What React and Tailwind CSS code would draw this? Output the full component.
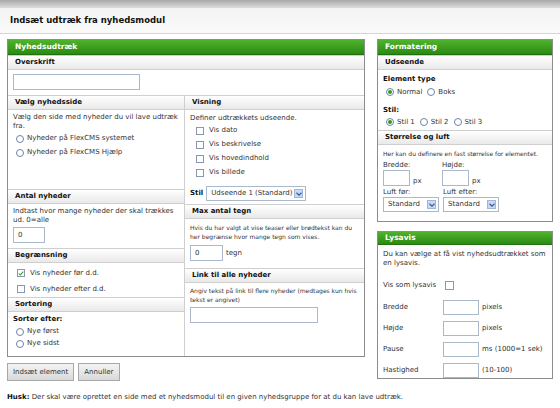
import React from "react";

const font = { fontFamily: '"DejaVu Sans", Verdana, sans-serif' };

const GreenHeader = ({ children }) => (
  <div className="h-[15px] flex items-center px-[7px] bg-gradient-to-b from-[#4fb32c] to-[#2b8a13] border-b border-[#21700e] text-white font-bold text-[7.5px]">
    {children}
  </div>
);

const SubHeader = ({ children }) => (
  <div className="h-[15px] flex items-center px-[7px] bg-gradient-to-b from-white to-[#e9e9e9] border-y border-[#cfcfcf] text-[#111] font-bold text-[7px]">
    {children}
  </div>
);

const Radio = ({ checked, label }) => (
  <span className="flex items-center gap-[3px]">
    <span className="w-[8px] h-[8px] rounded-full border border-[#6d84a4] bg-white flex items-center justify-center">
      {checked && <span className="w-[4px] h-[4px] rounded-full bg-[#2f9b1a]" />}
    </span>
    <span>{label}</span>
  </span>
);

const Check = ({ checked, label }) => (
  <div className="flex items-center gap-[5px]">
    <span className="w-[8px] h-[8px] border border-[#8898b0] bg-white flex items-center justify-center">
      {checked && (
        <svg width="7" height="7" viewBox="0 0 8 8">
          <path d="M1 4 L3 6 L7 1.5" fill="none" stroke="#2f9b1a" strokeWidth="1.4" />
        </svg>
      )}
    </span>
    <span>{label}</span>
  </div>
);

const Box = ({ w, h = "h-[16px]", value }) => (
  <div className={`${w} ${h} border border-[#a9b8ca] bg-white flex items-center px-[4px] text-[7px]`}>
    {value}
  </div>
);

const Select = ({ w, text }) => (
  <div className={`${w} h-[15px] border border-[#a9b8ca] bg-white flex items-center justify-between pl-[4px] pr-[2px]`}>
    <span>{text}</span>
    <span className="w-[9px] h-[9px] bg-[#c9d9f1] border border-[#9fb5d9] flex items-center justify-center">
      <svg width="6" height="4" viewBox="0 0 6 4">
        <path d="M0.5 0.8 L3 3.2 L5.5 0.8" fill="none" stroke="#3b5d9c" strokeWidth="1.2" />
      </svg>
    </span>
  </div>
);

export default function App() {
  return (
    <div style={font} className="w-[560px] h-[408px] bg-white text-[#333] text-[7px] overflow-hidden">
      <div className="h-[8px] bg-gradient-to-b from-[#a9a9a9] to-[#dcdcdc]" />
      <div className="h-[26px] flex items-center px-[10px] bg-gradient-to-b from-[#f3f3f3] to-[#fafafa] border-b border-[#d6d6d6]">
        <span className="font-bold text-[8.5px] text-[#111]">Indsæt udtræk fra nyhedsmodul</span>
      </div>

      <div className="flex gap-[12px] pl-[7px] pt-[5px]">
        <div className="w-[358px]">
          <div className="h-[318px] border border-[#8c8c8c] flex flex-col">
            <GreenHeader>Nyhedsudtræk</GreenHeader>
            <SubHeader>Overskrift</SubHeader>
            <div className="h-[25px] px-[5px] pt-[4px]">
              <Box w="w-[127px]" />
            </div>
            <div className="flex flex-1">
              <div className="w-[177px] border-r border-[#cfcfcf] flex flex-col">
                <SubHeader>Vælg nyhedsside</SubHeader>
                <div className="h-[79px] px-[5px] pt-[3px] leading-[9px]">
                  <p>Vælg den side med nyheder du vil lave udtræk fra.</p>
                  <div className="pl-[3px] pt-[3px] flex flex-col gap-[5px]">
                    <Radio label="Nyheder på FlexCMS systemet" />
                    <Radio label="Nyheder på FlexCMS Hjælp" />
                  </div>
                </div>
                <SubHeader>Antal nyheder</SubHeader>
                <div className="h-[44px] px-[5px] pt-[3px] leading-[9px]">
                  <p>Indtast hvor mange nyheder der skal trækkes ud. 0=alle</p>
                  <div className="pt-[2px]">
                    <Box w="w-[32px]" value="0" />
                  </div>
                </div>
                <SubHeader>Begrænsning</SubHeader>
                <div className="h-[34px] px-[5px] pt-[5px] pl-[9px] flex flex-col gap-[5px]">
                  <Check checked label="Vis nyheder før d.d." />
                  <Check label="Vis nyheder efter d.d." />
                </div>
                <SubHeader>Sortering</SubHeader>
                <div className="px-[5px] pt-[3px] leading-[9px]">
                  <p className="font-bold text-[#111] text-[7px]">Sorter efter:</p>
                  <div className="pl-[3px] pt-[3px] flex flex-col gap-[3px]">
                    <Radio label="Nye først" />
                    <Radio label="Nye sidst" />
                  </div>
                </div>
              </div>

              <div className="flex-1 flex flex-col">
                <SubHeader>Visning</SubHeader>
                <div className="h-[94px] px-[5px] pt-[4px] leading-[9px]">
                  <p>Definer udtrækkets udseende.</p>
                  <div className="pl-[6px] pt-[3px] flex flex-col gap-[5px]">
                    <Check label="Vis dato" />
                    <Check label="Vis beskrivelse" />
                    <Check label="Vis hovedindhold" />
                    <Check label="Vis billede" />
                  </div>
                  <div className="flex items-center gap-[3px] pt-[9px]">
                    <span className="font-bold text-[#111]">Stil</span>
                    <Select w="w-[100px]" text="Udseende 1 (Standard)" />
                  </div>
                </div>
                <SubHeader>Max antal tegn</SubHeader>
                <div className="h-[49px] px-[5px] pt-[4px] leading-[9px] text-[6px]">
                  <p>Hvis du har valgt at vise teaser eller brødtekst kan du her begrænse hvor mange tegn som vises.</p>
                  <div className="flex items-center gap-[3px] pt-[4px] text-[7px]">
                    <Box w="w-[33px]" value="0" />
                    <span>tegn</span>
                  </div>
                </div>
                <SubHeader>Link til alle nyheder</SubHeader>
                <div className="px-[5px] pt-[3px] leading-[9px] text-[6px]">
                  <p>Angiv tekst på link til flere nyheder (medtages kun hvis tekst er angivet)</p>
                  <div className="pt-[3px]">
                    <Box w="w-[128px]" />
                  </div>
                </div>
              </div>
            </div>
          </div>

          <div className="flex gap-[4px] pt-[6px]">
            <button className="h-[18px] px-[5px] border border-[#a8a8a8] bg-gradient-to-b from-[#f4f4f4] to-[#d9d9d9] text-[7px] text-[#333]">
              Indsæt element
            </button>
            <button className="h-[18px] px-[5px] border border-[#a8a8a8] bg-gradient-to-b from-[#f4f4f4] to-[#d9d9d9] text-[7px] text-[#333]">
              Annuller
            </button>
          </div>
          <p className="pt-[11px] text-[7px] whitespace-nowrap">
            <span className="font-bold text-[#111]">Husk:</span> Der skal være oprettet en side med et nyhedsmodul til en given nyhedsgruppe for at du kan lave udtræk.
          </p>
        </div>

        <div className="w-[176px] flex flex-col gap-[9px]">
          <div className="h-[183px] border border-[#8c8c8c] flex flex-col">
            <GreenHeader>Formatering</GreenHeader>
            <SubHeader>Udseende</SubHeader>
            <div className="h-[60px] px-[5px] pt-[4px]">
              <p className="font-bold text-[#111]">Element type</p>
              <div className="flex gap-[5px] pl-[3px] pt-[2px]">
                <Radio checked label="Normal" />
                <Radio label="Boks" />
              </div>
              <p className="font-bold text-[#111] pt-[8px]">Stil:</p>
              <div className="flex gap-[5px] pl-[3px] pt-[1px]">
                <Radio checked label="Stil 1" />
                <Radio label="Stil 2" />
                <Radio label="Stil 3" />
              </div>
            </div>
            <SubHeader>Størrelse og luft</SubHeader>
            <div className="px-[5px] pt-[4px] leading-[9px]">
              <p className="text-[6px]">Her kan du definere en fast størrelse for elementet.</p>
              <div className="flex gap-[3px] pt-[3px]">
                <div className="w-[56px]">
                  <p>Bredde:</p>
                  <div className="flex items-end gap-[3px]">
                    <Box w="w-[27px]" />
                    <span>px</span>
                  </div>
                </div>
                <div>
                  <p>Højde:</p>
                  <div className="flex items-end gap-[3px]">
                    <Box w="w-[27px]" />
                    <span>px</span>
                  </div>
                </div>
              </div>
              <div className="flex gap-[4px] pt-[2px]">
                <div>
                  <p>Luft før:</p>
                  <Select w="w-[56px]" text="Standard" />
                </div>
                <div>
                  <p>Luft efter:</p>
                  <Select w="w-[56px]" text="Standard" />
                </div>
              </div>
            </div>
          </div>

          <div className="h-[148px] border border-[#8c8c8c] flex flex-col">
            <GreenHeader>Lysavis</GreenHeader>
            <div className="px-[5px] pt-[5px] leading-[9px]">
              <p>Du kan vælge at få vist nyhedsudtrækket som en lysavis.</p>
              <div className="flex items-center pt-[13px]">
                <span className="w-[62px]">Vis som lysavis</span>
                <span className="w-[9px] h-[9px] border border-[#8898b0] bg-white" />
              </div>
              <div className="flex flex-col gap-[6px] pt-[10px]">
                {[
                  ["Bredde", "pixels"],
                  ["Højde", "pixels"],
                  ["Pause", "ms (1000=1 sek)"],
                  ["Hastighed", "(10-100)"],
                ].map(([l, r]) => (
                  <div key={l} className="flex items-center">
                    <span className="w-[60px]">{l}</span>
                    <Box w="w-[36px]" h="h-[15px]" />
                    <span className="pl-[3px]">{r}</span>
                  </div>
                ))}
              </div>
            </div>
          </div>
        </div>
      </div>
    </div>
  );
}
